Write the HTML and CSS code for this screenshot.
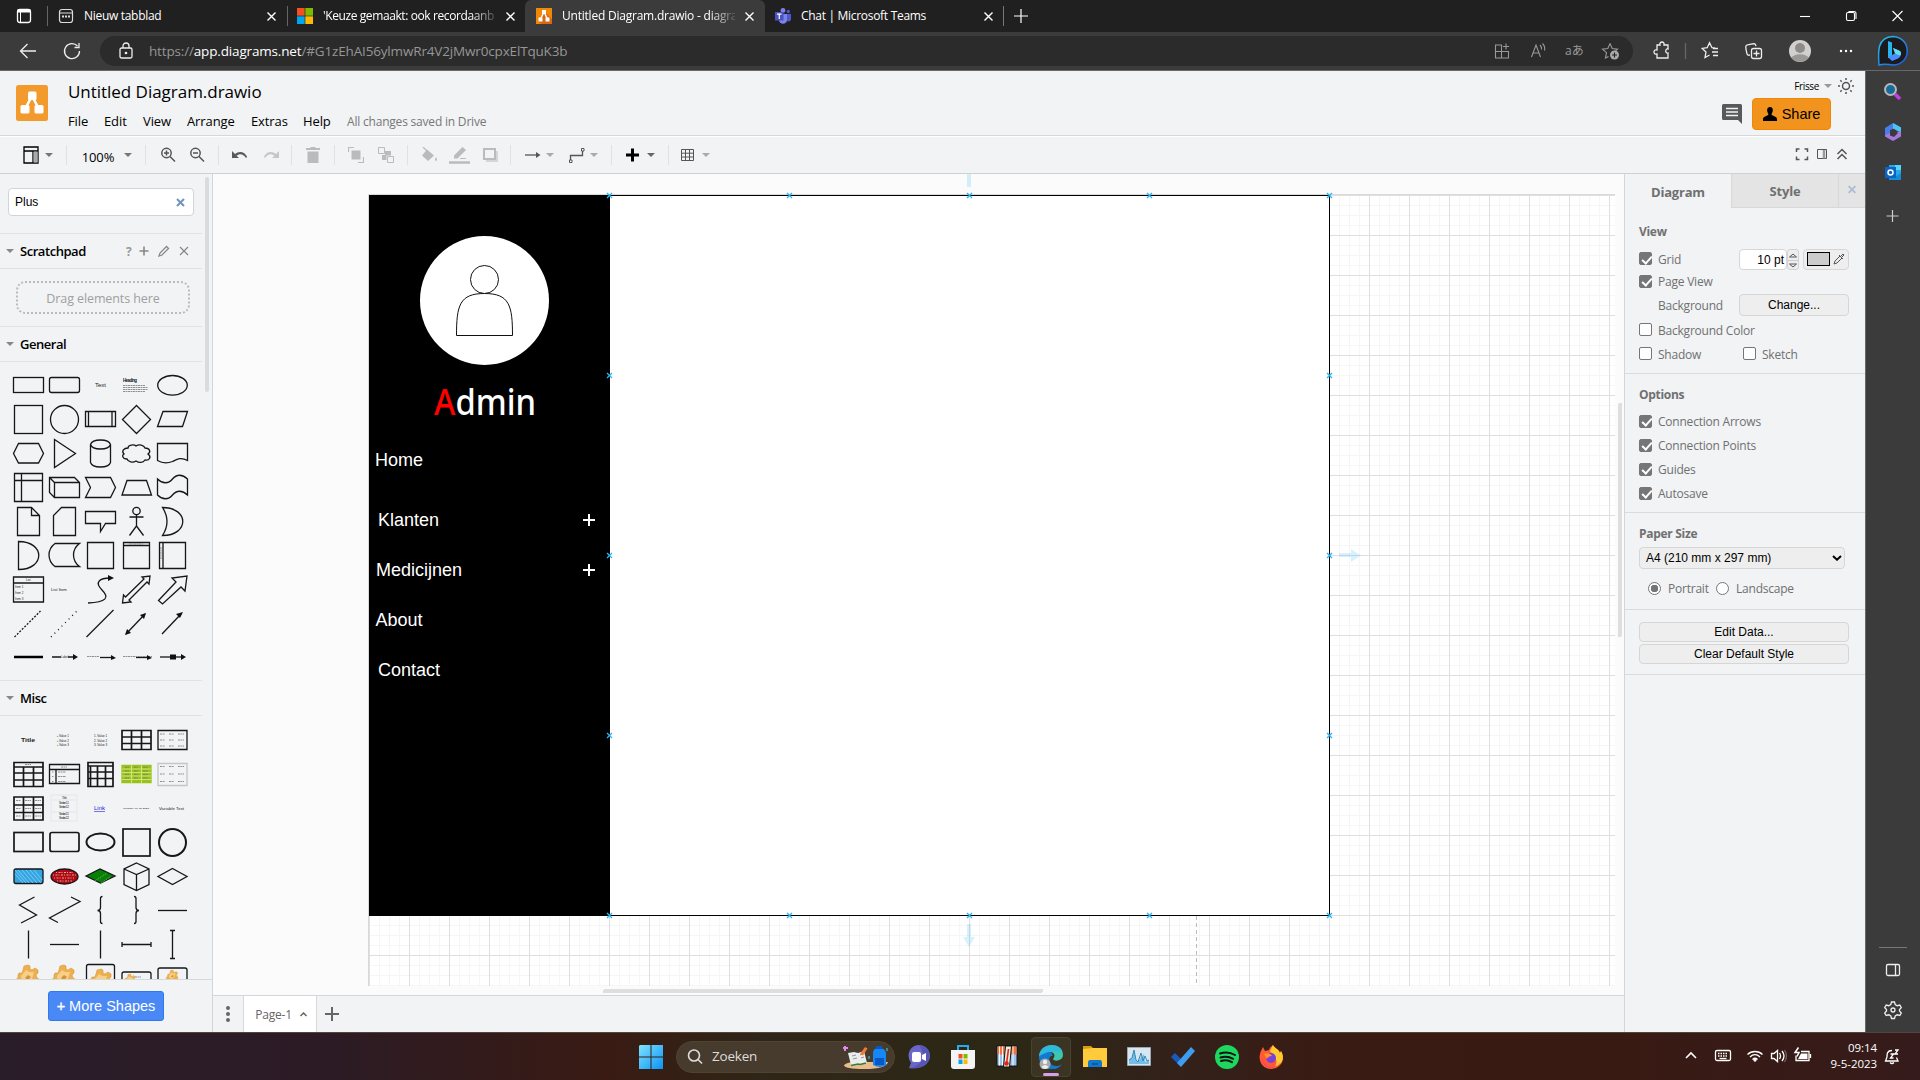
FILE: index.html
```html
<!DOCTYPE html>
<html lang="nl">
<head>
<meta charset="utf-8">
<title>Untitled Diagram.drawio - diagrams.net</title>
<link rel="stylesheet" href="styles.css">
</head>
<body>
<div class="screen">
<header class="tabstrip">
  <svg class="tabmenu" width="48" height="32" viewBox="0 0 48 32"><rect x="17.500" y="9.500" width="13" height="13" rx="2.500" fill="none" stroke="#fff" stroke-width="1.300"/><path d="M17.500 11h13" stroke="#fff" stroke-width="3"/><path d="M20.500 11v11" stroke="#fff"/><path d="M47.500 6v20" stroke="#666"/></svg>
  <div class="tab tab-first">
    <svg width="16" height="16" viewBox="0 0 16 16"><rect x="1.500" y="1.500" width="13" height="13" rx="2.500" fill="none" stroke="#ddd" stroke-width="1.200"/><path d="M2 5h12" stroke="#ddd"/><path d="M4 8.500h2m1 0h2m1 0h2" stroke="#ddd" stroke-width="2"/></svg>
    <span class="tabname">Nieuw tabblad</span>
    <svg class="x" width="9" height="9" viewBox="0 0 9 9"><path d="M.5.5l8 8m0-8l-8 8"/></svg>
  </div>
  <div class="tab tab-news">
    <svg width="16" height="16" viewBox="0 0 16 16"><path fill="#f25022" d="M0 0h7.700v7.700H0z"/><path fill="#7fba00" d="M8.300 0H16v7.700H8.300z"/><path fill="#00a4ef" d="M0 8.300h7.700V16H0z"/><path fill="#ffb900" d="M8.300 8.300H16V16H8.300z"/></svg>
    <span class="tabname fade">'Keuze gemaakt: ook recordaanb</span>
    <svg class="x" width="9" height="9" viewBox="0 0 9 9"><path d="M.5.5l8 8m0-8l-8 8"/></svg>
  </div>
  <div class="tab tab-active">
    <svg width="16" height="16" viewBox="0 0 16 16"><path fill="#f08705" d="M0 0h16v16H0z"/><path fill="#d86613" d="M8 3l8 8v5H5l-3-3z"/><path d="M8 4L4.500 11M8 4l3.500 7" stroke="#fff" stroke-width="1.500"/><path fill="#fff" d="M6 2h4v4H6zM2.500 9.500h4v4h-4zM9.500 9.500h4v4h-4z"/></svg>
    <span class="tabname fade">Untitled Diagram.drawio - diagra</span>
    <svg class="x" width="9" height="9" viewBox="0 0 9 9"><path d="M.5.5l8 8m0-8l-8 8"/></svg>
  </div>
  <div class="tab tab-teams">
    <svg width="16" height="16" viewBox="0 0 16 16"><circle cx="8" cy="2.500" r="2.400" fill="#7b83eb"/><circle cx="13.300" cy="3.500" r="1.700" fill="#5059c9"/><path fill="#5059c9" d="M11 6h5v5c0 2-2 3-4 2z"/><path fill="#7b83eb" d="M4 6h8v6c0 5-8 5-8 0z"/><path fill="#4b53bc" d="M0 4h8.500v8.500H0z"/><path d="M2 6.200h4.500M4.250 6v5" stroke="#fff" stroke-width="1.200"/></svg>
    <span class="tabname">Chat | Microsoft Teams</span>
    <svg class="x" width="9" height="9" viewBox="0 0 9 9"><path d="M.5.5l8 8m0-8l-8 8"/></svg>
  </div>
  <svg class="newtab" width="34" height="32" viewBox="0 0 34 32"><path d="M.5 6v20" stroke="#777"/><path d="M18 9v14M11 16h14" stroke="#fff" stroke-width="1.200"/></svg>
  <svg class="winctl" width="140" height="32" viewBox="0 0 140 32" fill="none" stroke="#fff" stroke-width="1.100"><path d="M20 16.500h10"/><rect x="66.500" y="12.500" width="8" height="8" rx="1.500"/><path d="M69 12v-.5h5c1.500 0 2 .5 2 2v5h-.5"/><path d="M112.500 11l10 10m0-10l-10 10"/></svg>
</header>
<div class="addressrow">
  <svg width="100" height="38" viewBox="0 0 100 38" fill="none" stroke="#eee" stroke-width="1.300"><path d="M36 19H20.500m7-7l-7 7 7 7"/><path d="M77.500 14a7.500 7.500 0 1 0 2 5M79 11v4.500h-4.500"/></svg>
  <div class="omnibox">
    <svg width="14" height="18" viewBox="0 0 14 18" fill="none" stroke="#eee" stroke-width="1.300"><rect x="1" y="6" width="12" height="10" rx="1.500"/><path d="M4 6V4c0-4 6-4 6 0v2"/><circle cx="7" cy="11" r=".7"/></svg>
    <span class="url">https://<b>app.diagrams.net</b>/#G1zEhAI56ylmwRr4V2jMwr0cpxElTquK3b</span>
    <svg class="omnicons" width="143" height="30" viewBox="0 0 143 30" fill="none" stroke="#999" stroke-width="1.100"><path d="M5.500 9h6v13h-6zM5.500 15.500h13v6.500h-13zM11.500 15.500v6.500M16 7.500v6M13 10.500h6"/><path d="M41.500 21l4.500-12 4.500 12M43 17h6M50 9q2 2 1.500 4.500M52.500 7.500q3 3 2 7"/><path d="M120 7.500l2.200 5 5.300.6-4 3.600M120 7.500l-2.200 5-5.300.6 4 3.600-1 5.200 3-1.500"/><circle cx="124.500" cy="19" r="4.500" fill="#aaa" stroke="none"/><path d="M124.500 16.500v5m-2.500-2.500h5" stroke="#222"/><text x="75" y="19">aあ</text></svg>
  </div>
  <svg width="287" height="38" viewBox="1633 32 287 38" fill="none" stroke="#eee" stroke-width="1.300"><path d="M1657 45h3c-1-4 5-4 4 0h4v4c-3-1-3 5 0 4v5h-11v-4c-4 1-4-5 0-4z"/><path d="M1685.500 43v16" stroke="#666"/><path d="M1715 48l-3-.3-2.500-5-2.300 5-5 .7 3.800 3.600-1 5.500 4.500-2.500M1713 48.500h5m-6 3.500h6m-5 3.500h5"/><path d="M1750 55l-1 .2c-2 .3-2-1-3-6-1-5 1-4 5-5 4-1 4.500-.5 5 2"/><rect x="1751.500" y="48.500" width="10" height="10" rx="2"/><path d="M1756.500 50.500v6m-3-3h6"/><circle cx="1800" cy="51" r="11" fill="#d2d0ce" stroke="none"/><circle cx="1800" cy="48" r="5" fill="#8e8b88" stroke="none"/><path d="M1791.500 58c2-5 15-5 17 0-4 5-13 5-17 0" fill="#9b9895" stroke="none"/><g fill="#fff" stroke="none"><circle cx="1841" cy="51" r="1.200"/><circle cx="1846" cy="51" r="1.200"/><circle cx="1851" cy="51" r="1.200"/></g><path d="M1879 65c-1-13-2-28 14-28.500 19 1 19 28 0 28.500-4 0-8-2-14 0z" fill="#1b1b1d" stroke="url(#bing)" stroke-width="1.500"/><path d="M1888 41l4 1.500v13l-4 3z" fill="#28b4f0" stroke="none"/><path d="M1888 57l5-2.500 3-1.500-3-5 5 2c5 2 3 7 0 8.500l-6 2.500z" fill="#4a8dff" stroke="none"/><path d="M1893 48l6 2.500c3 1.500 2 4 1 5l-5-2z" fill="#5ee0ea" stroke="none"/><defs><linearGradient id="bing" x2="1" y2="1"><stop stop-color="#2bc3e8"/><stop offset="1" stop-color="#1b55e0"/></linearGradient></defs></svg>
</div>

<div class="middle">
<div class="app">
  <div class="apphead">
    <svg class="logo" width="32" height="36" viewBox="0 0 32 36"><rect width="32" height="36" rx="2.500" fill="#f29a2b"/><path d="M16 11L9 24M16 11l7 13" stroke="#fff" stroke-width="2.600"/><rect x="12" y="6.500" width="8.500" height="8.500" rx="1.500" fill="#fff"/><rect x="4.500" y="20" width="9" height="8.500" rx="1.500" fill="#fff"/><rect x="18.500" y="20" width="9" height="8.500" rx="1.500" fill="#fff"/></svg>
    <div class="titles">
      <div class="doctitle">Untitled Diagram.drawio</div>
      <nav class="menubar"><span class="m1">File</span><span class="m2">Edit</span><span class="m3">View</span><span class="m4">Arrange</span><span class="m5">Extras</span><span class="m6">Help</span><span class="status">All changes saved in Drive</span></nav>
    </div>
    <div class="account">
      <div class="user"><span>Frisse</span><svg width="10" height="8" viewBox="0 0 10 8"><path d="M1 2h8L5 6z" fill="#999"/></svg><svg width="18" height="18" viewBox="0 0 18 18" fill="none" stroke="#555" stroke-width="1.500"><circle cx="9" cy="9" r="3.500"/><path d="M9 1v2m0 12v2M1 9h2m12 0h2M3.300 3.300l1.400 1.400m8.600 8.600l1.400 1.400m0-11.400l-1.400 1.400M4.700 13.300l-1.400 1.400"/></svg></div>
      <div class="shareline"><svg width="20" height="20" viewBox="0 0 20 20"><path d="M1.500 0h17Q20 0 20 1.500V20l-4-4H1.500Q0 16 0 14.500v-13Q0 0 1.500 0z" fill="#58595b"/><path d="M4 4.500h12M4 8h12m-12 3.500h12" stroke="#f1f3f4" stroke-width="1.600"/></svg>
      <button class="share"><svg width="14" height="14" viewBox="0 0 14 14"><path d="M7 0c3.500 0 3.500 4.500 1.500 7 0 2 5.500 2 5.500 5v2H0v-2c0-3 5.500-3 5.500-5C3.500 4.500 3.500 0 7 0z"/></svg>Share</button></div>
    </div>
  </div>
  <div class="toolbar">
    <svg width="16" height="18" viewBox="0 0 16 18"><path d="M1 1h14v16H1zM1 5h14M10 5v12" fill="none" stroke="#000" stroke-width="1.300"/><path d="M10.600 5.600h4V16.500h-4z" fill="#aaa"/></svg>
    <i class="caret"></i><i class="sep"></i><span class="zoom">100%</span><i class="caret"></i><i class="sep"></i>
    <svg width="16" height="16" viewBox="0 0 16 16" fill="none" stroke="#555" stroke-width="1.500"><circle cx="6.500" cy="6" r="4.700"/><path d="M10 9.500l5 5M4 6h5M6.500 3.500v5"/></svg>
    <svg width="16" height="16" viewBox="0 0 16 16" fill="none" stroke="#555" stroke-width="1.500"><circle cx="6.500" cy="6" r="4.700"/><path d="M10 9.500l5 5M4 6h5"/></svg>
    <i class="sep"></i>
    <svg width="16" height="10" viewBox="0 0 16 10"><path d="M0 1v7h7L4.500 5.800c3-2.800 7-2 9.300 2l1.500-.6C13 1.500 7 .5 3 4z" fill="#58595b"/></svg>
    <svg width="16" height="10" viewBox="0 0 16 10"><path d="M16 1v7H9l2.500-2.200c-3-2.800-7-2-9.300 2L.7 7.200C3 1.500 9 .5 13 4z" fill="#c4c6c8"/></svg>
    <i class="sep"></i>
    <svg width="14" height="16" viewBox="0 0 14 16" fill="#bbb"><path d="M0 1h4l1-1h4l1 1h4v2H0zM1.500 4.500h11V16h-11z"/></svg>
    <i class="sep"></i>
    <svg width="16" height="16" viewBox="0 0 16 16" fill="#bbb"><path d="M3.500 3.500h9v9h-9z"/><path d="M.5 5V.5H6M10 15.500h5.500V10" fill="none" stroke="#bbb" stroke-width="1.200"/></svg>
    <svg width="16" height="16" viewBox="0 0 16 16" fill="#bbb"><path d="M7 4h6v4.500H8.500V13H4V8h3z"/><path d="M.5.500h6v6h-6zM9.500 9.500h6v6h-6z" fill="#f1f3f5" stroke="#bbb"/></svg>
    <i class="sep"></i>
    <svg width="17" height="16" viewBox="0 0 17 16" fill="#bbb"><path d="M6 2.500l7 6L7 14 1 8.500zM15 10q2 3 0 4-2-1 0-4"/><path d="M2 0l6 6" stroke="#bbb" stroke-width="1.300"/></svg>
    <svg width="21" height="18" viewBox="0 0 21 18" fill="#bbb"><path d="M5 9.500L13.500 1 17 4l-8.500 8.500H5z"/><path d="M0 16.500h21" stroke="#bbb" stroke-width="2.500"/><path d="M11 12.500h6" stroke="#bbb"/></svg>
    <svg width="15" height="14" viewBox="0 0 15 14" fill="none" stroke="#bbb" stroke-width="2"><path d="M1 1h11v10H1z"/><path d="M14 3v10H3" stroke="#d5d5d5"/></svg>
    <i class="sep"></i>
    <svg width="44" height="20" viewBox="516 145 44 20"><path d="M525 155h12" stroke="#555" stroke-width="1.300"/><path d="M536 152l4.500 3-4.500 3z" fill="#555"/><path d="M546 153h8l-4 4z" fill="#aaa"/></svg>
    <svg width="44" height="20" viewBox="560 145 44 20"><path d="M570.500 160v-4.500h12V151" stroke="#555" stroke-width="1.300" fill="none"/><path d="M569.500 160h2.500v2.500h-2.500zM581.500 148.500h2.500v2.500h-2.500z" fill="#fff" stroke="#555"/><path d="M590 153h8l-4 4z" fill="#aaa"/></svg>
    <i class="sep"></i>
    <svg width="44" height="20" viewBox="618 145 44 20"><path d="M632.500 148.500v13M626 155h13" stroke="#000" stroke-width="3"/><path d="M647 153h8l-4 4z" fill="#666"/></svg>
    <i class="sep"></i>
    <svg width="44" height="20" viewBox="674 145 44 20"><path d="M681.500 149.500h12v11h-12zM685.500 149.500v11M689.500 149.500v11M681.500 153.200h12M681.500 157h12" stroke="#555" fill="none"/><path d="M702 153h8l-4 4z" fill="#aaa"/></svg>
    <svg class="viewctl" width="65" height="20" viewBox="1790 145 65 20" fill="none" stroke="#555" stroke-width="1.500"><path d="M1796.500 152v-3h3m5 0h3v3m0 4.500v3h-3m-5 0h-3v-3"/><path d="M1817.500 149.500h9v9h-9z" stroke-width="1"/><path d="M1824 150v8.500" stroke-width="2.500" stroke="#999"/><path d="M1837.500 154l4.500-4.500 4.500 4.500m-9 5l4.500-4.500 4.500 4.500"/></svg>
  </div>
  <div class="work">
    <aside class="shapes">
      <div class="shapelist">
        <div class="searchrow"><div class="search"><span>Plus</span><svg width="9" height="9" viewBox="0 0 9 9"><path d="M1 1l7 7m0-7L1 8" stroke="#7094bd" stroke-width="2"/></svg></div></div>
        <div class="sect"><i></i><b>Scratchpad</b><svg width="68" height="18" viewBox="122 242 68 18" fill="none" stroke="#888"><text class="q" x="126" y="255.500">?</text><path d="M139.500 251h9m-4.500-4.500v9" stroke-width="1.600"/><path d="M159 256l1-3 6.500-6.500 2 2L162 255z" stroke-width="1.300"/><path d="M180 247l8 8m0-8l-8 8" stroke-width="1.200"/></svg></div>
        <div class="droprow"><div class="drop">Drag elements here</div></div>
        <div class="sect"><i></i><b>General</b></div>
        <div class="palette">
<svg><rect x="3.500" y="9.500" width="30" height="15"/></svg><svg><rect x="3.500" y="9.500" width="30" height="15" rx="2"/></svg><svg><text x="13" y="19" class="t6">Text</text></svg><svg><text x="5" y="13.500" class="t5 bold" textLength="14">Heading</text><path class="fine" d="M5 17.500h22M5 19.500h25M5 21.500h25M5 23.500h22"/></svg><svg><ellipse cx="18.500" cy="17.300" rx="14.800" ry="9.800"/></svg>
<svg><rect x="4.500" y="3.500" width="28" height="28"/></svg><svg><circle cx="18.500" cy="17.500" r="14"/></svg><svg><path d="M3.500 9.500h30v15h-30zM6.500 9.500v15M30 9.500v15"/></svg><svg><path d="M18.500 3.500l14 14-14 14-14-14z"/></svg><svg><path d="M9 9.500h24.500l-5 15h-25z"/></svg>
<svg><path d="M8.500 7.500h20l5 10-5 9.500h-20l-5-9.500z"/></svg><svg><path d="M8.500 3.500l21 14-21 14z"/></svg><svg><path d="M8.500 8.500v18c2 6 18 6 20 0v-18c-2-6-18-6-20 0c2 6 18 6 20 0"/></svg><svg><path d="M10 12c0-3 6-4 8-2 3-2 8-1 9 2 5 0 6 4 3 6 4 3 1 7-3 6-2 3-6 3-9 1-3 2-8 1-9-2-5 0-5-4-3-5-3-3 0-6 4-6z"/></svg><svg><path d="M3.500 7.500h30v17c-7-4-11-1-15 1-5 2-10 2-15-1z"/></svg>
<svg><path d="M4.500 3.500h28v28h-28zM11.500 3.500v28M4.500 10.500h28"/></svg><svg><path d="M3.500 7.500h25l5 5v15h-25l-5-5zM3.500 7.500l5 5h25M8.500 12.500v15"/></svg><svg><path d="M3.500 7.500h25l5 10-5 10h-25l5-10z"/></svg><svg><path d="M9 10.500h19.500l5 14.500h-29.500z"/></svg><svg><path d="M3.500 9c5 5 11 5 15 0s10-5 15 0v16c-5-5-11-5-15 0s-10 5-15 0z"/></svg>
<svg><path d="M7.500 3.500h14l8 8v20h-22zM21.500 3.500v8h8"/></svg><svg><path d="M15.500 3.500h14v28h-22v-20z"/></svg><svg><path d="M3.500 7.500h30v12h-10l-5 8v-8h-15z"/></svg><svg><circle cx="18.500" cy="7" r="3.700"/><path d="M18.500 11v11l-7 9.500M18.500 22l7 9.500M11.500 13h14"/></svg><svg><path d="M8.500 3.500c27 0 27 28 0 28q9-14 0-28z"/></svg>
<svg><path d="M8.500 3.500c27 0 27 28 0 28z"/></svg><svg><path d="M9 5.500h24.500c-8 6-8 17 0 23H9c-8-6-8-17 0-23z"/></svg><svg><path d="M5.500 4.500h26v26h-26z"/></svg><svg><path d="M5.500 4.500h26v26h-26zM5.500 7.500h26"/><path class="fine" d="M11 6h14"/></svg><svg><path d="M5.500 4.500h26v26h-26zM9 4.500v26"/><path class="fine" d="M7 9v12"/></svg>
<svg><path d="M3.500 5h30v25h-30zM3.500 11h30"/><text class="t3" x="16" y="9">List</text><text class="t3" x="5" y="16">Item 1</text><text class="t3" x="5" y="22">Item 2</text><text class="t3" x="5" y="28">Item 3</text></svg><svg><text class="t4" x="5" y="18.500">List Item</text></svg><svg><path d="M6 31c18-1 22-5 14-13-8-8-2-12 8-12"/><path class="solid" d="M26 3l6 3-6 3z"/></svg><svg><path d="M4.500 31l1-8 2 2L26 7l-2-2 8-1-1 8-2-2L11 28l2 2z"/></svg><svg><path d="M4.500 28.500L22 10l-4-4 15-2-2 15-4-4L8.500 32z"/></svg>
<svg><path d="M4.500 31l26-26" stroke-dasharray="2 1.500"/></svg><svg><path d="M5 31l26-26" stroke-dasharray="1 4"/></svg><svg><path d="M4.500 31l27-27"/></svg><svg><path d="M8 28l19-20"/><path class="solid" d="M7 29l2-6 4 4zM28 7l-6 2 4 4z"/></svg><svg><path d="M8 28l19-20"/><path class="solid" d="M29 6l-7 2 4 4z"/></svg>
<svg><path class="thick" d="M4 17h29"/></svg><svg><path d="M6 17h9m7 0h6"/><text class="t3" x="15" y="18">Label</text><path class="solid" d="M27 14l5 3-5 3z"/></svg><svg><path d="M18 17.500h12"/><path class="fine" d="M5 16.500h12"/><path class="solid" d="M29 15l5 3-5 2z"/></svg><svg><path d="M18 17.500h12"/><path class="fine" d="M5 16.500h29"/><path class="solid" d="M29 15l5 3-5 2z"/></svg><svg><path d="M6 17h22"/><path class="solid" d="M16 14.500h6v5h-6zM27 14l5 3-5 3z"/></svg>
        </div>
        <div class="sect"><i></i><b>Misc</b></div>
        <div class="palette misc">
<svg><text x="11" y="19" class="t6 bold" textLength="14" lengthAdjust="spacingAndGlyphs">Title</text></svg><svg><text class="t3" x="11" y="14">▪  Value 1</text><text class="t3" x="11" y="18.500">▪  Value 2</text><text class="t3" x="11" y="22.500">▪  Value 3</text></svg><svg><text class="t3" x="12" y="14">1.  Value 1</text><text class="t3" x="12" y="18.500">2.  Value 2</text><text class="t3" x="12" y="22.500">3.  Value 3</text></svg><svg><path class="heavy" d="M4 7.500h29v19H4zM4 14h29M4 20.500h29M13.500 7.500v19M23.500 7.500v19"/></svg><svg><path d="M4 7.500h29v19H4z"/><path class="fine" d="M6 11h5m4 0h5m4 0h6M6 17h5m4 0h5m4 0h6M6 23h5m4 0h5m4 0h6"/></svg>
<svg><path class="heavy" d="M4 5.500h29v24H4zM4 10h29M4 16h29M4 23h29M13.500 10v19M23.500 10v19"/><path class="fine" d="M15 7.500h6"/></svg><svg><path d="M3.500 7.500h30v19h-30zM3.500 12.500h30M10 12.500v14"/><path class="fine" d="M15 10h6M12 15h8m-8 4.500h8m-8 5h8M6 15h1.500M6 19.500h1.500M6 24.500h1.500"/></svg><svg><path class="heavy" d="M6 5.500h25v24H6zM6 9h25M6 15h25M6 21.500h25M8.500 9v20M15.500 9v20M23.500 9v20"/></svg><svg><path d="M4 8.500h29v17H4z" fill="#9bc21b" stroke="#9bc21b"/><path d="M4 12h29M4 15.500h29M4 19h29M4 22.500h29M13.500 8v18M23.500 8v18" stroke="#d6ed88" stroke-width=".8"/><path class="fine" d="M7 10.300h4m5 0h4m5 0h5M7 14h4m5 0h4m5 0h5M7 17.500h4m5 0h4m5 0h5M7 21h4m5 0h4m5 0h5"/></svg><svg><path d="M4 6.500h29v22H4z" stroke="#c5c5c5"/><path class="fine" d="M6 9.500h5m4 0h5m4 0h6M6 17h5m4 0h5m4 0h6M6 24.500h5m4 0h5m4 0h6"/></svg>
<svg><path class="heavy" d="M4 6h29v23H4zM4 14h29M4 21.500h29M13.500 6v23M23.500 6v23"/><path class="fine" d="M6 9.500h5m4 0h6m4 0h6M6 17.500h5m4 0h6m4 0h6M6 25h5m4 0h6m4 0h6"/></svg><svg><path d="M5 4h26v26H5zM5 9h26M5 21h26" stroke="#e8eaec"/><text class="t3" x="16" y="8" textLength="5">Title</text><text class="t3" x="13" y="13" textLength="10">Section 1.1</text><text class="t3" x="13" y="16.500" textLength="10">Section 1.2</text><text class="t3" x="13" y="24" textLength="10">Section 2.1</text><text class="t3" x="13" y="27.500" textLength="10">Section 2.2</text></svg><svg><text x="12" y="19" class="t6 link">Link</text></svg><svg><text class="t2" x="5" y="18" textLength="26" lengthAdjust="spacingAndGlyphs">Tuesday 09 05 2023</text></svg><svg><text x="5" y="18.500" class="t4" textLength="25">Variable Text</text></svg>
<svg><rect class="heavy" x="4" y="7.500" width="29" height="19"/></svg><svg><rect class="heavy" x="4" y="7.500" width="29" height="19" rx="2"/></svg><svg><ellipse class="heavy2" cx="18.500" cy="17" rx="14" ry="8.500"/></svg><svg><rect class="heavy" x="5" y="4" width="27" height="27"/></svg><svg><circle class="heavy2" cx="18.500" cy="17.500" r="13.500"/></svg>
<svg><rect x="4" y="10" width="29" height="14.500" rx="2" fill="#32a5e3"/><path d="M5 15l8 9M5 11l11 13M8 11l11 13M12 11l11 13M16 11l11 13M20 11l11 13M24 11l8 10" stroke="#91d1f3" stroke-width=".8"/></svg><svg><ellipse cx="18.500" cy="17.500" rx="13.500" ry="7.500" fill="#b00b12"/><path d="M7 16h23M8 19h20M10 13.500h17M11 22h15" stroke="#e9b0b0" stroke-dasharray="1 1.500 2 1" stroke-width=".9"/></svg><svg><path d="M4 17l14-7 15 7-14.500 7z" fill="#078008"/><path d="M13 22l12-8M19 24l9-6" stroke="#5a3" stroke-dasharray="1 1"/></svg><svg><path d="M18.500 4l12.500 6v15.500l-12.500 6L6 25.500V10zM6 10l12.500 5.500L31 10M18.500 15.500v16"/></svg><svg><path d="M18.500 9.500l14.500 8-14.500 8-14.500-8z"/></svg>
<svg><path d="M24.500 4L9.500 12l17 10-15.500 8"/></svg><svg><path d="M25 4l9 4.500L3.500 25l8.500 4.500"/></svg><svg><path d="M20.500 3.500q-2 0-2 2v9q0 3-3 3 3 0 3 3v8q0 2 2 2"/></svg><svg><path d="M16 3.500q2 0 2 2v9q0 3 3 3-3 0-3 3v8q0 2-2 2"/></svg><svg><path d="M4 17.500h29"/></svg>
<svg><path d="M18.500 3.500v28"/></svg><svg><path d="M4 17.500h29"/></svg><svg><path d="M18.500 3.500v28"/></svg><svg><path d="M4 17.500h29M4 15v5m29-5v5"/></svg><svg><path d="M18.500 3.500v28M16 3.500h5M16 31.500h5"/></svg>
<svg><use href="#gear"/></svg><svg><use href="#gear"/></svg><svg><rect x="4.500" y="3.500" width="28" height="28" rx="2"/><use href="#gear" x="1" y="4"/></svg><svg><rect x="4" y="11" width="29" height="20" rx="2"/><use href="#gear" transform="translate(3 11) scale(.5)"/><path class="fine" d="M17 16h6"/></svg><svg><rect x="4" y="7" width="29" height="20" rx="2"/><use href="#gear" transform="translate(9.500 7) scale(.5)"/></svg>
        </div>
      </div>
      <i class="vscroll"></i>
      <div class="more"><button><b>+</b> More Shapes</button></div>
    </aside>
    <main class="stage">
      <svg class="canvas" width="1411" height="821" viewBox="213 174 1411 821">
        <defs>
          <pattern id="grid" x="369" y="195" width="40" height="40" patternUnits="userSpaceOnUse"><path d="M10.500 0v40M20.500 0v40M30.500 0v40M0 10.500h40M0 20.500h40M0 30.500h40" stroke="#f6f6f6" fill="none"/><path d="M.5 0v40M0 .5h40" stroke="#dfdfdf" fill="none"/></pattern>
          <path id="pt" d="M-2.500 -2.500l5 5m0-5l-5 5" stroke="#29b6f2" stroke-width="1.300"/>
          <g id="gear"><path d="M8 14l1-2 3 0 1-3 1-4 4-1 2 1 0 3 2 1 3-2 3 2 0 3-2 2 1 3 2 1-1 4-3 1-2 4H10l0-3-4-1-1-4 3-2z" fill="#eeb04e" stroke="#d9953a" stroke-width=".6"/><path d="M11 15l5-6 3 2 5 0-2 7-5 4-5-2z" fill="#f7cf86" stroke="none"/><path d="M15 17l3-3 3 2-3 3z" fill="#d98f33" stroke="none"/></g>
        </defs>
        <path d="M369 195h1246v791H369z" fill="#fff"/><path d="M369 195h1246v791H369z" fill="url(#grid)"/><path d="M368.500 986V194.500h1246.500" fill="none" stroke="#d9d9d9"/>
        <path d="M1196.500 916v70" stroke="#bbb" stroke-dasharray="4 3"/>
        <rect x="369" y="195" width="241" height="721"/>
        <rect x="609.500" y="195.500" width="720" height="720" fill="#fff" stroke="#000"/>
        <circle cx="484.500" cy="300.500" r="64.500" fill="#fff"/><g fill="#fff" stroke="#111"><circle cx="484.500" cy="279.500" r="14"/><path d="M456.500 335.500c0-30 3-42 28-42s28 12 28 42z"/></g>
        <text class="admin" x="434" y="415" textLength="102" lengthAdjust="spacingAndGlyphs"><tspan fill="#f00">A</tspan>dmin</text>
        <g class="nav"><text x="375" y="466">Home</text><text x="378" y="526">Klanten</text><text x="376" y="576">Medicijnen</text><text x="375.500" y="626">About</text><text x="378" y="676">Contact</text></g>
        <path d="M583 520h12m-6-6v12M583 570h12m-6-6v12" stroke="#fff" stroke-width="2"/>
        <g fill="#29b6f2" opacity=".18"><path d="M967 174h4v13h-4zM967 924h4v13h4L969 947l-6-10h4zM1339 553h12v-4l10 6.500-10 6.500v-5h-12z"/></g>
        <use href="#pt" x="609.500" y="195.500"/><use href="#pt" x="789.500" y="195.500"/><use href="#pt" x="969.500" y="195.500"/><use href="#pt" x="1149.500" y="195.500"/><use href="#pt" x="1329.500" y="195.500"/><use href="#pt" x="609.500" y="375.500"/><use href="#pt" x="609.500" y="555.500"/><use href="#pt" x="609.500" y="735.500"/><use href="#pt" x="1329.500" y="375.500"/><use href="#pt" x="1329.500" y="555.500"/><use href="#pt" x="1329.500" y="735.500"/><use href="#pt" x="609.500" y="915.500"/><use href="#pt" x="789.500" y="915.500"/><use href="#pt" x="969.500" y="915.500"/><use href="#pt" x="1149.500" y="915.500"/><use href="#pt" x="1329.500" y="915.500"/>
        <rect x="603" y="989" width="440" height="4" rx="2" fill="#dedede"/><rect x="1618" y="403" width="4" height="234" rx="2" fill="#dedede"/>
      </svg>
      <div class="pages"><svg width="30" height="36" viewBox="0 0 30 36" fill="#666"><circle cx="15" cy="12" r="2"/><circle cx="15" cy="18" r="2"/><circle cx="15" cy="24" r="2"/></svg><div class="page">Page-1<svg width="7" height="5" viewBox="0 0 7 5"><path d="M.5 4l3-3 3 3" fill="none" stroke="#666" stroke-width="1.500"/></svg></div><svg width="30" height="36" viewBox="0 0 30 36"><path d="M15 11v14M8 18h14" stroke="#666" stroke-width="2"/></svg></div>
    </main>
    <aside class="format">
      <div class="ftabs"><b class="on">Diagram</b><b>Style</b><svg width="27" height="33" viewBox="0 0 27 33"><path d="M10 12l7 7m0-7l-7 7" stroke="#a9bdd3" stroke-width="1.900"/></svg></div>
      <section class="fs view">
        <h4>View</h4>
        <div class="row grid"><i class="cb on"></i><span>Grid</span><div class="num">10 pt</div><div class="step"><svg width="10" height="20" viewBox="0 0 10 20" fill="none" stroke="#555"><path d="M1.500 7L5 4l3.500 3zM1.500 14L5 17l3.500-3z"/><path d="M0 10.500h10" stroke="#ccc"/></svg></div><div class="color"><i></i><svg width="12" height="12" viewBox="0 0 12 12" fill="none" stroke="#555"><path d="M1 11l1-3 5-5 2 2-5 5zM6 2l4 4M8 3l2-2 1 1-2 2"/></svg></div></div>
        <div class="row pv"><i class="cb on"></i><span>Page View</span></div>
        <div class="row bg"><span>Background</span><button class="fbtn">Change...</button></div>
        <div class="row bc"><i class="cb"></i><span>Background Color</span></div>
        <div class="row sh"><i class="cb"></i><span>Shadow</span><i class="cb"></i><span>Sketch</span></div>
      </section>
      <section class="fs opts">
        <h4>Options</h4>
        <div class="row"><i class="cb on"></i><span>Connection Arrows</span></div>
        <div class="row"><i class="cb on"></i><span>Connection Points</span></div>
        <div class="row"><i class="cb on"></i><span>Guides</span></div>
        <div class="row"><i class="cb on"></i><span>Autosave</span></div>
      </section>
      <section class="fs paper">
        <h4>Paper Size</h4>
        <div class="select">A4 (210 mm x 297 mm)<svg width="10" height="6" viewBox="0 0 10 6"><path d="M1 1l4 3.700L9 1" fill="none" stroke="#000" stroke-width="2"/></svg></div>
        <div class="row radio"><i class="rb on"></i><span>Portrait</span><i class="rb"></i><span>Landscape</span></div>
      </section>
      <section class="fs edit"><button class="fbtn">Edit Data...</button><button class="fbtn">Clear Default Style</button></section>
    </aside>
  </div>
</div>
<aside class="edgebar">
  <svg width="54" height="170" viewBox="1866 71 54 170" fill="none"><path d="M1895 94l5 5" stroke="#c43de8" stroke-width="3.500"/><circle cx="1890.500" cy="89.500" r="5.500" fill="#176b9a" stroke="#b8b8b8" stroke-width="2"/><path d="M1885 128l8-5 8 4.500v5l-8-4-3 3v7l-5-3z" fill="#4a7de8"/><path d="M1893 123l8 4.500v5l-8-4z" fill="#4cc4ee"/><path d="M1885 135l8-3 8-.5v5l-8 4.500-8-4.500z" fill="#a678dd"/><path d="M1890 130l4-1 4 4-4 4-4-1.500z" fill="#3b3b3b"/><path d="M1889 165h12v14h-12z" fill="#28a8ea"/><path d="M1895 165h6v5h-6z" fill="#50d9ff"/><path d="M1889 174l6 3 6-4v7h-12z" fill="#148bd6"/><path d="M1885 167h11v11h-11z" fill="#0a64c2"/><circle cx="1890.500" cy="172.500" r="2.500" stroke="#fff" stroke-width="1.500"/><path d="M1892.500 210v12m-6-6h12" stroke="#ccc" stroke-width="1.200"/></svg>
  <svg width="54" height="92" viewBox="1866 940 54 92" fill="none" stroke="#eee" stroke-width="1.300"><path d="M1879 947.500h28" stroke="#777" stroke-width="1"/><rect x="1886.500" y="964.500" width="13" height="11" rx="1.500"/><path d="M1895.500 965v10"/><circle cx="1893" cy="1010" r="2"/><path d="M1891.500 1002h3l.7 2.500 2 1.200 2.600-.7 1.500 2.600-1.800 1.900v1.500l1.800 2-1.500 2.500-2.600-.7-2 1.200-.7 2.500h-3l-.7-2.500-2-1.200-2.600.7-1.500-2.500 1.800-2v-1.500l-1.800-1.900 1.500-2.600 2.600.7 2-1.200z"/></svg>
</aside>
</div>

<footer class="taskbar">
  <svg class="start" width="24" height="24" viewBox="0 0 24 24"><defs><linearGradient id="win" x2="1" y2="1"><stop stop-color="#7fe3ff"/><stop offset="1" stop-color="#0a93f5"/></linearGradient></defs><path fill="url(#win)" d="M1 0h10.500v11.500H0V1zM12.500 0H24v11.500H12.500zM0 12.500h11.500V24H0zM12.500 12.500H24V24H12.500z"/></svg>
  <div class="tsearch"><svg width="16" height="16" viewBox="0 0 16 16" fill="none" stroke="#ddd" stroke-width="1.600"><circle cx="7" cy="6.500" r="5.500"/><path d="M11 10.500l4 4"/></svg><span>Zoeken</span>
  <svg class="art" width="46" height="25" viewBox="0 0 46 25"><path d="M1 21q5-4 20-3l24 0q-2 7-23 7T1 21z" fill="#e8bd8a"/><path d="M5 9l6-1 4 1 6-2 3 12-6 1-3 0-7 1z" fill="#e8efe8"/><path d="M8 21.500l7-1.500 2 .5 6-1.500" fill="none" stroke="#397b45" stroke-width="1.500"/><path d="M9 12l4-1m-3 4l4-1m3-3l3-1m-2 4l3-1" stroke="#96a" stroke-width=".8"/><path d="M17 10l5-7 2.500 1.500-4.500 7z" fill="#f47b31"/><path d="M30 9q0-5 6-5t7 5v12q-6 4-13 0z" fill="#1687f5"/><path d="M33 5V2h6v3M32 14h9v7h-9z" fill="#0758c5"/><path d="M2 2v5M0 4h5" stroke="#e18aed" stroke-width="2"/><path d="M26 12v3m18-11v3" stroke="#4dd"/></svg></div>
  <div class="apps">
    <svg viewBox="0 0 24 24"><path d="M2 23l2-5C-2 9 4 0 12 0s13 8 10 15-11 9-20 8z" fill="#6d66c9"/><path d="M12 0c8 0 13 8 10 15s-11 9-20 8c13-2 18-11 10-23z" fill="#5756b5"/><rect x="5" y="7" width="9" height="10" rx="2" fill="#fff"/><path d="M15 10l4-2v8l-4-2z" fill="#fff"/></svg>
    <svg viewBox="0 0 24 24"><path d="M7 6V1h10v5" fill="none" stroke="#22aaf2" stroke-width="2"/><path d="M0 5h24v16q0 3-3 3H3q-3 0-3-3z" fill="#f4f4f4"/><path d="M7.500 9h4v4.500h-4z" fill="#f25022"/><path d="M12.500 9h4v4.500h-4z" fill="#7fba00"/><path d="M7.500 14.500h4V19h-4z" fill="#00a4ef"/><path d="M12.500 14.500h4V19h-4z" fill="#ffb900"/></svg>
    <svg viewBox="0 0 24 24"><path d="M2 1h20v20H2z" fill="#9cc3ec" stroke="#111"/><path d="M2.500 1.500h19v8h-19z" fill="#ef7442"/><path d="M4.500 1.500v19M7.500 1.500v19M18 1.500v19" stroke="#fff" stroke-width=".9"/><path d="M10.500 1h6l-2 21h-6z" fill="#e8f0d8" stroke="#111"/><path d="M13.500 4l-2 15" stroke="#e52020" stroke-width="1.600"/><circle cx="11.500" cy="18.500" r="2.300" fill="#e52020"/></svg>
    <div class="edge"><svg viewBox="0 0 24 24"><path d="M0 12C0-3 24-4 24 10c0 6-9 7-10 4 4-5-1-9-7-6C2 10 1 14 0 12z" fill="#3dc5b0"/><path d="M0 12C1 5 12 3 14 11c-3-1-6 4-1 9 4 2 8 1 10-1-6 10-23 5-23-7z" fill="#1279d0"/><path d="M0 11C2-3 20-2 23 6L9 7z" fill="#2db8dc"/><circle cx="6" cy="19" r="5.500" fill="#aaa"/><circle cx="6" cy="17" r="2.200" fill="#eee"/><path d="M2.500 22q3.500-4 7 0-3.500 4-7 0" fill="#eee"/></svg><i></i></div>
    <svg viewBox="0 0 24 24"><path d="M0 1h8l3 3H0z" fill="#d99a0b"/><path d="M0 4l10-1h14v19H0z" fill="#ffcb3d"/><path d="M5 22v-4q0-3 2-3h10q2 0 2 3v4z" fill="#0f78cf"/><path d="M9 19h6" stroke="#073e7f"/></svg>
    <svg viewBox="0 0 24 24"><path d="M.5 2.500h23v18H.5z" fill="#d8e6ef" stroke="#99a9b4"/><path d="M2 15l3-2 2-8 2 10 2 2 3-5 3-3 1 8 4-2v4H2z" fill="#74bee7"/><path d="M2 15l3-2 2-8 2 10 2 2 3-9 2 8 2-5 2 5 2-1" fill="none" stroke="#3487ba"/></svg>
    <svg viewBox="0 0 24 24"><path d="M0 12l4-4 6 6v8z" fill="#185abd"/><path d="M6 18L20 2l4 4L10 22z" fill="#3f9df0"/></svg>
    <svg viewBox="0 0 24 24"><circle cx="12" cy="12" r="12" fill="#1ed760"/><path d="M5 8.500q8-2.500 15 1.500M5.500 12.500q7-2 12.500 1.300M6 16q6-1.700 11 1.200" fill="none" stroke="#111" stroke-width="2" stroke-linecap="round"/></svg>
    <svg viewBox="0 0 24 24"><path d="M12 24C3 24-2 15 2 6l2-4 2 4 4-1c1-3 3-4 4-5 1 3 6 4 7 8l1-2c6 10-2 18-10 18z" fill="#ff5a35"/><path d="M14 0c1 3 6 4 7 8l1-2c5 9-1 14-6 16 4-7-1-11-5-16z" fill="#ffcb2f"/><path d="M2 10c1 16 16 15 19 7-6 10-18 5-19-7z" fill="#e9307e"/><circle cx="12" cy="13" r="5" fill="#7c42d8"/><path d="M5 9q6-2 8 2-4 0-5 3z" fill="#ff9327"/></svg>
  </div>
  <svg class="tray" width="145" height="48" viewBox="1680 1033 145 48" fill="none" stroke="#fff" stroke-width="1.300"><path d="M1686 1058l5-5 5 5" stroke-width="1.600"/><rect x="1715.500" y="1050.500" width="15" height="10" rx="1.500"/><path d="M1718 1053.500h10m-10 2.500h10" stroke-dasharray="1.500 1"/><path d="M1719.500 1058.500h7"/><path d="M1747.500 1054.500c4-4 11-4 15 0m-12.500 2.500c3-3 7-3 10 0m-7.500 2.500c1.500-1.500 3.500-1.500 5 0"/><circle cx="1755" cy="1060" r="1" fill="#fff"/><path d="M1771.500 1053.500h2.500l3.500-3v11l-3.500-3h-2.500zM1779.500 1053q2 3 0 6m2.500-8q4 5 0 10"/><path d="M1784.500 1050q4 6 0 12" stroke="#77625e"/><path d="M1801 1051.500h8v9h-13v-5M1810.500 1054v4"/><path d="M1801 1053.500h6.500v5.500H1798z" fill="#fff" stroke="none"/><path d="M1798.500 1047.500l-3.500 5h4l-2 4" stroke-width="1.500"/></svg>
  <div class="clock">09:14<br>9-5-2023</div>
  <svg width="16" height="18" viewBox="0 0 16 18" fill="none" stroke="#fff" stroke-width="1.300"><path d="M8 2.500C3 2.500 3 6 3 9l-1.500 4h12.500l-1.500-3.500M6 14.500q2 2 4 0M6.500 6h3L6.500 10h3M11 2h3l-3 4h3"/></svg>
</footer>
</div>
</body>
</html>
```

FILE: styles.css
```css
* { box-sizing: border-box; }
body { margin: 0; background: #000; }
svg { display: block; flex: none; }
button { font: inherit; padding: 0; margin: 0; }
.screen { width: 1920px; height: 1080px; overflow: hidden; display: flex; flex-direction: column; font-family: "Open Sans", "Noto Sans", sans-serif; font-size: 12px; color: #000; background: #3b3b3b; }

/* browser chrome */
.tabstrip { height: 32px; background: #202020; display: flex; align-items: center; color: #fff; }
.tab { height: 32px; display: flex; align-items: center; gap: 10px; padding: 0 11px 0 10px; width: 238px; }
.tab-first { width: 240px; border-right: 1px solid #666; border-image: linear-gradient(transparent 20%, #666 20%, #666 80%, transparent 80%) 1; }
.tab-first { padding-left: 10px; padding-right: 11px; }
.tab-news { width: 237px; padding-left: 9px; padding-right: 10px; }
.tab-active { width: 240px; background: #3b3b3b; border-radius: 6px 6px 0 0; padding: 0 11px 0 11px; }
.tab-teams { width: 238px; padding: 0 10px 0 10px; }
.tabname { flex: 1; white-space: nowrap; line-height: 20px; font-size: 12px; letter-spacing: -.3px; }
.tab-news .tabname { letter-spacing: -.4px; }
.tab-active .tabname { letter-spacing: -.22px; }
.fade { -webkit-mask-image: linear-gradient(90deg, #000 85%, rgba(0,0,0,.15)); mask-image: linear-gradient(90deg, #000 85%, rgba(0,0,0,.15)); min-width: 0; }
.x path { stroke: #fff; stroke-width: 1.4; }
.winctl { margin-left: auto; }
.addressrow { height: 39px; background: #3b3b3b; border-bottom: 1px solid #68686c; display: flex; }
.omnibox { width: 1533px; height: 30px; margin-top: 4px; border-radius: 15px; background: #2b2b2b; display: flex; align-items: center; padding-left: 19px; }
.url { margin-left: 16px; font-size: 13.500px; color: #969696; letter-spacing: -.16px; }
.url b { font-weight: 400; color: #fff; }
.omnicons { margin-left: auto; }
.omnicons text { font: 12px "Open Sans", "Noto Sans CJK JP", sans-serif; fill: #999; stroke: none; }
.middle { height: 961px; display: flex; }
.app { width: 1866px; border-right: 1px solid #68686c; background: #f1f3f5; display: flex; flex-direction: column; }
.edgebar { width: 54px; background: #3b3b3b; display: flex; flex-direction: column; justify-content: space-between; }

/* application header */
.apphead { height: 65px; border-bottom: 1px solid #d5d7da; display: flex; padding: 0 15px 0 16px; }
.logo { margin-top: 14px; }
.titles { margin-left: 20px; }
.doctitle { font-size: 17px; line-height: 24px; margin-top: 9px; letter-spacing: -.03px; }
.menubar { display: flex; font-size: 13px; line-height: 20px; margin-top: 7px; letter-spacing: -.1px; white-space: nowrap; }
.m1 { width: 36px; } .m2 { width: 39px; } .m3 { width: 44px; } .m4 { width: 64px; } .m5 { width: 52px; } .m6 { width: 44px; }
.status { color: #777; font-size: 12px; letter-spacing: -.2px; padding-top: 1px; }
.account { margin-left: auto; display: flex; flex-direction: column; align-items: flex-end; }
.user { display: flex; align-items: center; height: 30px; font-size: 10px; letter-spacing: -.35px; gap: 4px; margin-right: -5px; }
.shareline { display: flex; gap: 10px; align-items: center; margin-right: 19px; margin-top: -3px; }
.share { width: 79px; height: 32px; border: 1px solid #f08705; border-radius: 4px; background: #f2931e; font: 14.500px "Liberation Sans", Arial, sans-serif; display: flex; align-items: center; justify-content: center; gap: 5px; color: #000; }

.toolbar { height: 38px; border-top: 1px solid #fff; border-bottom: 1px solid #cfd1d4; padding-left: 18px; display: grid; grid-template-columns: 25px 12px 22px 43px 16px 18px 28px 30px 12px 32px 30px 10px 34px 8px 36px 24px 18px 26px 34px 28px 12px 44px 44px 14px 44px 12px 44px 1fr; place-items: center; }
.caret { width: 8px; height: 4px; background: #777; clip-path: polygon(0 0, 100% 0, 50% 100%); }
.sep { width: 1px; height: 20px; background: #dfe1e3; }
.zoom { font-size: 13px; letter-spacing: -.1px; line-height: 16px; padding-top: 3px; margin-left: -1px; }
.viewctl { justify-self: end; margin-right: 10px; }

/* shape library */
.work { flex: 1; min-height: 0; display: flex; }
.shapes { width: 213px; border-right: 1px solid #d3d5d8; position: relative; display: flex; flex-direction: column; }
.shapelist { height: 805px; overflow: hidden; width: 202px; }
.searchrow { height: 60px; border-bottom: 1px solid #dfe1e4; padding: 14px 8px; }
.search { height: 28px; border: 1px solid #d2d4d7; border-radius: 4px; background: #fff; padding: 0 8px 0 6px; display: flex; align-items: center; justify-content: space-between; font: 12px "Liberation Sans", Arial, sans-serif; }
.sect { height: 35px; border-bottom: 1px solid #dfe1e4; display: flex; align-items: center; padding: 0 12px 0 6px; font-size: 13px; }
.sect i { width: 8px; height: 4px; background: #888; clip-path: polygon(0 0, 100% 0, 50% 100%); }
.sect b { margin-left: 6px; font-weight: 600; letter-spacing: -.45px; }
.sect svg { margin-left: auto; }
.q { font: bold 12px "Open Sans", sans-serif; fill: #999; stroke: none; }
.droprow { height: 58px; border-bottom: 1px solid #dfe1e4; padding: 12px 12px 0 16px; }
.drop { height: 33px; border: 2px dotted #b9bbbd; border-radius: 9px; text-align: center; line-height: 31px; font-size: 12.500px; color: #a0a0a0; letter-spacing: -.1px; }
.palette { display: grid; grid-template-columns: repeat(5, 36px); grid-auto-rows: 34px; padding: 6px 10px; border-bottom: 1px solid #dfe1e4; }
.misc { padding-top: 7px; }
.palette > svg { width: 36px; height: 34px; fill: none; stroke: #15171a; stroke-width: 1.300; overflow: visible; }
.palette text { font-family: "Liberation Sans", Arial, sans-serif; fill: #222; stroke: none; }
.t6 { font-size: 6px; } .t5 { font-size: 4.500px; } .t4 { font-size: 4.200px; } .t3 { font-size: 3px; } .t2 { font-size: 2.500px; }
.bold { font-weight: bold; }
.palette text.link { fill: #22d; text-decoration: underline; }
.fine { stroke: #777; stroke-width: .8; stroke-dasharray: 2 .5; }
.solid { fill: #111; stroke: none; }
.thick { stroke: #000; stroke-width: 2.500; }
.heavy { stroke-width: 1.700; } .heavy2 { stroke-width: 2; }
.vscroll { position: absolute; left: 205px; top: 3px; width: 4px; height: 215px; border-radius: 2px; background: #dadbdd; }
.more { height: 53px; border-top: 1px solid #d6d8da; padding: 11px 0 0 48px; }
.more button { width: 116px; height: 30px; border: 1px solid #3079ed; border-radius: 3px; background: #4a89f5; color: #fff; font: 14.500px "Liberation Sans", Arial, sans-serif; white-space: nowrap; }
.more b { font-weight: 500; -webkit-text-stroke: .4px #fff; }

/* drawing area */
.stage { width: 1411px; background: #fbfbfb; }
.canvas rect { shape-rendering: crispEdges; }
.canvas text { font-family: "Liberation Sans", Arial, sans-serif; fill: #fff; }
.canvas .admin { font: 500 37px "Noto Sans", sans-serif; }
.nav { font-size: 18px; }
.pages { height: 37px; border-top: 1px solid #d3d5d8; background: #f1f3f5; display: flex; }
.page { width: 74px; background: #fff; border: solid #d6d8da; border-width: 0 1px; display: flex; align-items: center; justify-content: center; gap: 8px; color: #666; letter-spacing: -.2px; padding-left: 2px; }

/* format panel */
.format { width: 241px; border-left: 1px solid #d3d5d8; color: #707070; }
.ftabs { display: flex; height: 34px; font-size: 13px; letter-spacing: -.2px; text-align: center; line-height: 35px; }
.ftabs b { width: 107px; background: #e4e4e4; border: solid #d6d8da; border-width: 0 0 1px 1px; }
.ftabs b.on { width: 106px; background: none; border: 0; line-height: 37px; }
.ftabs svg { width: 27px; height: 34px; background: #e4e4e4; border: solid #d6d8da; border-width: 0 0 1px 1px; }
.fs { border-bottom: 1px solid #d9dbde; padding-left: 14px; letter-spacing: -.22px; }
.fs h4 { margin: 0; font-size: 12px; line-height: 18px; font-weight: 700; letter-spacing: -.3px; }
.row { display: flex; align-items: center; height: 24px; }
.row span { line-height: 18px; padding-top: 2px; margin-left: 6px; white-space: nowrap; }
.cb { width: 13px; height: 13px; border: 1px solid #767676; border-radius: 2px; background: #fff; flex: none; }
.cb.on { background: #767676; position: relative; }
.cb.on::after { content: ""; position: absolute; left: 3.500px; top: .5px; width: 4px; height: 8px; border: solid #fff; border-width: 0 2px 2px 0; transform: rotate(42deg); }
.view { height: 166px; padding-top: 15px; }
.grid { height: 24px; margin-top: 6px; }
.grid .cb { margin-top: -1px; }
.grid span, .bg span { width: 81px; }
.num { width: 48px; height: 21px; border: 1px solid #d6d6d6; border-radius: 4px; background: #fff; color: #000; text-align: right; padding-right: 2px; font: 12px/20px "Liberation Sans", Arial, sans-serif; letter-spacing: 0; }
.step { width: 12px; height: 21px; border: 1px solid #d2d2d2; border-radius: 3px; background: #eee; }
.color { margin-left: 4px; width: 46px; height: 21px; border: 1px solid #d6d6d6; border-radius: 4px; background: #eee; display: flex; align-items: center; gap: 3px; padding-left: 3px; }
.color i { width: 23px; height: 14px; border: 1px solid #000; background: #ccc; }
.pv { height: 22px; margin-top: -1px; }
.bg { margin-left: 13px; height: 26px; }
.bg .fbtn { width: 110px; height: 22px; }
.bc { height: 24px; }
.sh { height: 23px; }
.bc .cb, .sh .cb { margin-top: -1px; }
.sh span:nth-of-type(1) { width: 85px; }
.fbtn { border: 1px solid #d6d6d6; border-radius: 4px; background: #eee; color: #000; font: 12px "Liberation Sans", Arial, sans-serif; }
.opts { height: 139px; padding-top: 12px; }
.opts h4 { margin-bottom: 5px; }
.opts .row { height: 24px; }
.paper { height: 97px; padding-top: 12px; }
.select { margin-top: 4px; width: 206px; height: 22px; border: 1px solid #d6d6d6; border-radius: 4px; background: #eee; color: #000; font: 12px "Liberation Sans", Arial, sans-serif; letter-spacing: 0; display: flex; align-items: center; justify-content: space-between; padding: 0 2px 0 6px; }
.radio { height: 20px; margin: 9px 0 0 9px; }
.rb { width: 13px; height: 13px; border: 1px solid #767676; border-radius: 50%; background: #fff; }
.rb.on { background: radial-gradient(#767676 0 3.500px, #fff 4px); }
.radio span { margin-left: 7px; }
.radio span:nth-of-type(1) { width: 48px; }
.edit { height: 65px; padding-top: 12px; display: flex; flex-direction: column; gap: 2px; }
.edit .fbtn { width: 210px; height: 20px; }

/* taskbar */
.taskbar { height: 48px; display: flex; align-items: center; color: #fff; border-top: 1px solid #52453f; background: linear-gradient(90deg, #2a1d2a 0, #2c1b25 330px, #391b13 610px, #2f2518 760px, #2c2815 1000px, #33211a 1180px, #391b13 1330px, #391a13 1620px, #351b1b 1920px); }
.start { margin-left: 639px; }
.tsearch { margin-left: 13px; width: 219px; height: 32px; border-radius: 16px; background: #463b2c; border: 1px solid #50442f; display: flex; align-items: center; padding: 0 5px 0 10px; }
.tsearch span { margin-left: 9px; font-size: 13.500px; color: #ddd; letter-spacing: -.2px; line-height: 18px; padding-bottom: 2px; }
.art { margin-left: auto; }
.apps { display: flex; margin-left: 2px; }
.apps > svg, .edge { width: 44px; height: 40px; }
.apps > svg { padding: 8px 10px; }
.edge { margin: 0 2px; width: 40px; border: 1px solid #484230; background: #3b3423; border-radius: 4px; display: flex; flex-direction: column; align-items: center; padding-top: 7px; gap: 4px; }
.edge svg { width: 24px; height: 24px; }
.edge i { width: 16px; height: 3px; border-radius: 2px; background: #d7a0e8; }
.tray { margin-left: 387px; }
.clock { width: 52px; text-align: right; font-size: 11.500px; line-height: 16px; letter-spacing: -.05px; margin-right: 7px; white-space: nowrap; padding-bottom: 2px; }
```
